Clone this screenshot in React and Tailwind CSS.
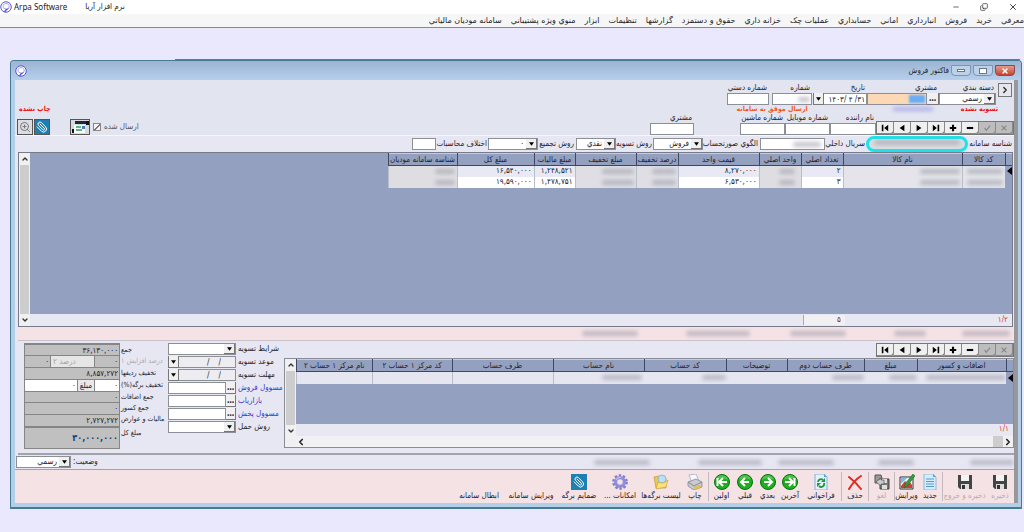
import React, { useState } from "react";
import { Minus, X, Copy, ChevronUp, ChevronDown, ChevronLeft, ChevronRight, ZoomIn, Paperclip } from "lucide-react";

const menus = [
  "معرفي",
  "خريد",
  "فروش",
  "انبارداري",
  "اماني",
  "حسابداري",
  "عمليات چک",
  "خزانه داري",
  "حقوق و دستمزد",
  "گزارشها",
  "تنظيمات",
  "ابزار",
  "منوي ويژه پشتيباني",
  "سامانه موديان مالياتي",
];

const Logo = () => (
  <svg viewBox="0 0 24 24" className="w-3 h-3 shrink-0">
    <circle cx="12" cy="12" r="10.5" fill="#fff" stroke="#5a55cf" strokeWidth="2" />
    <path d="M8 15C5 12 6 5 12 5s8 6 5 10" fill="none" stroke="#8d89e6" strokeWidth="1.500" />
    <path d="M7 14c4 2 7 2 11-1-1 5-6 5-7 9l-3 0c1-3 3-4 3-6-2 0-3-1-4-2z" fill="#5a55cf" />
  </svg>
);

const Smudge = ({ className = "" }) => (
  <span className={`block h-[5px] rounded-sm bg-[#9a9aa8] opacity-60 blur-[2px] ${className}`} />
);

const Arrow = ({ className = "" }) => (
  <span
    className={`absolute inset-y-0 w-[11px] flex items-center justify-center bg-[#f0f0f0] border-r border-b border-[#777] pointer-events-none ${className}`}
  >
    <svg viewBox="0 0 6 4" className="w-[5px] h-[4px]">
      <path d="M0 0h6L3 4z" fill="#000" />
    </svg>
  </span>
);

const Select = ({ id, options, label, className = "" }) => (
  <span className={`relative flex h-3 bg-white border border-[#8d8f96] ${className}`}>
    <select id={id} aria-label={label} className="w-full appearance-none bg-transparent pr-[13px] pl-px leading-[10px] outline-none">
      {options.map((o) => (
        <option key={o}>{o}</option>
      ))}
    </select>
    <Arrow className="right-0" />
  </span>
);

const Box = ({ id, value = "", label, bg = "bg-white", className = "" }) => (
  <input
    id={id}
    aria-label={label}
    defaultValue={value}
    className={`block h-3 min-w-0 border border-[#8d8f96] px-px leading-[10px] outline-none ${bg} ${className}`}
  />
);

const Column = ({ id, label, className = "", children }) => (
  <div className={`flex flex-col shrink-0 ${className}`}>
    <label htmlFor={id} className="pr-0.5 h-2.5 leading-[10px] whitespace-nowrap">
      {label}
    </label>
    {children}
  </div>
);

const navIcons = [
  { name: "cancel", off: true, d: "M2 2l6 6M8 2l-6 6" },
  { name: "confirm", off: true, d: "M2 5l2 3 5-6" },
  { name: "remove", d: "M1 5h8", wide: true },
  { name: "add", d: "M1 5h8M5 1v8", wide: true },
  { name: "last", fill: "M1 1l5 4-5 4zM7 1h2v8H7z" },
  { name: "next", fill: "M2 1l6 4-6 4z" },
  { name: "previous", fill: "M8 1L2 5l6 4z" },
  { name: "first", fill: "M9 1L4 5l5 4zM1 1h2v8H1z" },
];

const RecordNav = () => (
  <div className="flex h-3.5 shrink-0 bg-[#9a9a9a] border border-[#777]">
    {navIcons.map((n) => (
      <button
        key={n.name}
        aria-label={n.name}
        className={`w-[17px] h-3 flex items-center justify-center rounded-br-sm border-r border-b border-[#888] ${
          n.off ? "bg-[#bdbdbd]" : "bg-[#efefef]"
        }`}
      >
        <svg viewBox="0 0 10 10" className="w-2 h-2">
          {n.fill ? (
            <path d={n.fill} fill="#000" />
          ) : (
            <path d={n.d} fill="none" stroke={n.off ? "#858585" : "#000"} strokeWidth={n.wide ? 2.6 : 1.4} />
          )}
        </svg>
      </button>
    ))}
  </div>
);

const VScroll = () => (
  <div className="w-[11px] shrink-0 flex flex-col items-center bg-[#f0f0f0] text-[#333]">
    <ChevronUp className="w-2 h-3" strokeWidth={4} />
    <div className="flex-1 w-[9px] bg-[#cdcdcd]" />
    <ChevronDown className="w-2 h-3" strokeWidth={4} />
  </div>
);

const th = "h-3 p-0 bg-[#94a0c0] border-l border-b border-[#3f4763] border-t border-t-[#c4cbe0] font-normal leading-[10px] whitespace-nowrap overflow-hidden";
const td = "h-[11px] p-0 pr-0.5 leading-[10px] border-l border-[#b9bccb] overflow-hidden whitespace-nowrap";

const itemRows = [
  { qty: "۲", price: "۸,۲۷۰,۰۰۰", tax: "۱,۲۴۸,۵۲۱", total: "۱۶,۵۴۰,۰۰۰" },
  { qty: "۳", price: "۶,۵۳۰,۰۰۰", tax: "۱,۴۷۸,۷۵۱", total: "۱۹,۵۹۰,۰۰۰" },
];

const ItemsTable = () => (
  <table className="table-fixed w-[624px] border-collapse">
    <colgroup>
      <col className="w-[7px]" />
      <col className="w-[43px]" />
      <col className="w-[119px]" />
      <col className="w-[42px]" />
      <col className="w-[42px]" />
      <col className="w-[81px]" />
      <col className="w-[42px]" />
      <col className="w-[61px]" />
      <col className="w-[41px]" />
      <col className="w-[77px]" />
      <col className="w-[69px]" />
    </colgroup>
    <thead>
      <tr>
        <th className={th}></th>
        <th className={th}>کد کالا</th>
        <th className={th}>نام کالا</th>
        <th className={th}>تعداد اصلي</th>
        <th className={th}>واحد اصلي</th>
        <th className={th}>قيمت واحد</th>
        <th className={th}>درصد تخفيف</th>
        <th className={th}>مبلغ تخفيف</th>
        <th className={th}>مبلغ ماليات</th>
        <th className={th}>مبلغ کل</th>
        <th className={th}>شناسه سامانه موديان</th>
      </tr>
    </thead>
    <tbody>
      {itemRows.map((r, i) => (
        <tr key={r.total} className={i === 0 ? "bg-[#e8e9f4]" : "bg-white"}>
          <td className="p-0 bg-[#94a0c0]">
            {i === 0 && (
              <svg viewBox="0 0 5 8" className="w-[5px] h-2">
                <path d="M5 0v8L0 4z" fill="#000" />
              </svg>
            )}
          </td>
          <td className={`${td} bg-[#e4e4ea]`}><Smudge className="w-9" /></td>
          <td className={`${td} bg-[#e4e4ea]`}><Smudge className="w-10" /></td>
          <td className={td}>{r.qty}</td>
          <td className={`${td} bg-[#dedee2]`}><Smudge className="w-4 mr-1" /></td>
          <td className={td}>{r.price}</td>
          <td className={`${td} bg-[#dedee4]`}><Smudge className="w-6" /></td>
          <td className={`${td} bg-[#dedee4]`}><Smudge className="w-8" /></td>
          <td className={td}>{r.tax}</td>
          <td className={td}>{r.total}</td>
          <td className={`${td} bg-[#dedee2]`}><Smudge className="w-5" /></td>
        </tr>
      ))}
    </tbody>
  </table>
);

const AccountsTable = () => (
  <table className="table-fixed w-full border-collapse">
    <colgroup>
      <col className="w-[7px]" />
      <col className="w-[89px]" />
      <col className="w-[53px]" />
      <col className="w-[77px]" />
      <col className="w-[61px]" />
      <col className="w-[82px]" />
      <col className="w-[91px]" />
      <col className="w-[101px]" />
      <col className="w-[80px]" />
      <col />
    </colgroup>
    <thead>
      <tr>
        <th className={th}></th>
        <th className={th}>اضافات و کسور</th>
        <th className={th}>مبلغ</th>
        <th className={th}>طرف حساب دوم</th>
        <th className={th}>توضيحات</th>
        <th className={th}>کد حساب</th>
        <th className={th}>نام حساب</th>
        <th className={th}>طرف حساب</th>
        <th className={th}>کد مرکز ۱ حساب ۲</th>
        <th className={th}>نام مرکز ۱ حساب ۲</th>
      </tr>
    </thead>
    <tbody>
      <tr className="bg-[#e5e6f0]">
        <td className="p-0 bg-[#94a0c0]">
          <svg viewBox="0 0 5 8" className="w-[5px] h-2">
            <path d="M5 0v8L0 4z" fill="#000" />
          </svg>
        </td>
        <td className="p-0 h-3"><Smudge className="w-20" /></td>
        <td className="p-0"><Smudge className="w-7" /></td>
        <td className="p-0"><Smudge className="w-8" /></td>
        <td className="p-0"></td>
        <td className="p-0"><Smudge className="w-6" /></td>
        <td className={td}><Smudge className="w-10" /></td>
        <td className={td}></td>
        <td className={td}></td>
        <td className={td}></td>
      </tr>
    </tbody>
  </table>
);

// Toolbar icons
const Floppy = () => (
  <svg viewBox="0 0 16 16" className="w-4 h-4">
    <path d="M1 1h14v14H3l-2-2z" fill="#444" />
    <path d="M4 1h8v6H4z" fill="#f3f3f3" />
    <path d="M4 10h8v5H4z" fill="#ddd" />
    <path d="M5 11h3v4H5z" fill="#333" />
  </svg>
);

const NewDoc = () => (
  <svg viewBox="0 0 16 16" className="w-4 h-4">
    <path d="M2 0h9l3 3v13H2z" fill="#d7ecfb" stroke="#8bbbe0" />
    <path d="M11 0v3h3" fill="#5aa3dc" />
    <path d="M4 5h8M4 7.500h8M4 10h8M4 12.500h8" stroke="#4f9bd8" />
  </svg>
);

const EditIcon = () => (
  <svg viewBox="0 0 16 16" className="w-4 h-4">
    <path d="M1 3h13v12H1z" fill="#f3f3f3" stroke="#333" />
    <path d="M2 12l4-5 3 3 2-2 2 3v3H2z" fill="#db3a33" />
    <path d="M2 4h6L3 9H2z" fill="#7bbbe8" />
    <path d="M14 0l2 2-8 10-3 2 1-4z" fill="#2f9e43" stroke="#176b29" strokeWidth=".6" />
  </svg>
);

const UndoIcon = () => (
  <svg viewBox="0 0 16 16" className="w-4 h-4">
    <path d="M6 5h9v10H6z" fill="#777" stroke="#444" />
    <path d="M8 5h5v4H8zM8 11h5v4H8z" fill="#ddd" />
    <path d="M1 1h6l1 3-3 1v4H1z" fill="#999" stroke="#555" />
    <path d="M2 8l5-4v2h3v4H7v2z" fill="#ccc" stroke="#555" strokeWidth=".7" />
  </svg>
);

const DeleteIcon = () => (
  <svg viewBox="0 0 16 16" className="w-4 h-4">
    <path d="M2 3c4 3 8 7 12 12M14 2C9 5 5 10 2 15" fill="none" stroke="#e02a1f" strokeWidth="2" strokeLinecap="round" />
  </svg>
);

const RefreshIcon = () => (
  <svg viewBox="0 0 16 16" className="w-4 h-4">
    <path d="M2 0h9l3 3v13H2z" fill="#e3f1fc" stroke="#7fb2dc" />
    <path d="M11 0v3h3" fill="#5aa3dc" />
    <path d="M5 8a3 3 0 0 1 5-2M11 9a3 3 0 0 1-5 3" fill="none" stroke="#1d9a35" strokeWidth="1.800" />
    <path d="M12 4v4H8zM4 13V9h4z" fill="#1d9a35" />
  </svg>
);

const arrows = {
  last: "M3 8h7M7 4l4 4-4 4M12.500 4v8",
  next: "M4 8h8M8 4l4 4-4 4",
  prev: "M12 8H4M8 4L4 8l4 4",
  first: "M13 8H6M9 4L5 8l4 4M3.500 4v8",
};

const Green = ({ dir }) => (
  <svg viewBox="0 0 16 16" className="w-4 h-4">
    <circle cx="8" cy="8" r="7.500" fill="#1fae1f" stroke="#0c6e12" />
    <path d="M2 6a6.200 6.200 0 0 1 12 0c-3-2-9-2-12 0z" fill="#63cf5c" opacity=".7" />
    <path d={arrows[dir]} fill="none" stroke="#fff" strokeWidth="2" />
  </svg>
);

const PrintIcon = () => (
  <svg viewBox="0 0 16 16" className="w-4 h-4">
    <path d="M2 1l7-1 3 7-7 2z" fill="#f5f8ff" stroke="#9aa3b5" strokeWidth=".7" />
    <path d="M1 8l8-3 6 3v5l-8 3-6-4z" fill="#c9cbd1" stroke="#777c88" strokeWidth=".7" />
    <path d="M1 8l6 4 8-4" fill="none" stroke="#888" />
    <path d="M7 13l6-2 1 2-6 3z" fill="#e8bf45" />
  </svg>
);

const FolderIcon = () => (
  <svg viewBox="0 0 16 16" className="w-4 h-4">
    <path d="M1 3l5-1 2 2h5v10H3z" fill="#f0c64f" stroke="#c5973a" strokeWidth=".7" />
    <circle cx="9" cy="5" r="4" fill="#b9e0f3" stroke="#79b4d3" strokeWidth=".8" />
    <path d="M3 15l2-7c4 2 7 1 10-2l-2 7z" fill="#fbe17e" stroke="#d0a53d" strokeWidth=".7" />
  </svg>
);

const GearIcon = () => (
  <svg viewBox="0 0 16 16" className="w-4 h-4">
    <circle cx="8" cy="8" r="6.500" fill="none" stroke="#7f7cc9" strokeWidth="2.600" strokeDasharray="2.400 1.684" />
    <circle cx="8" cy="8" r="4.400" fill="none" stroke="#908ddb" strokeWidth="3.200" />
    <path d="M4 6a4.500 4.500 0 0 1 5-2.500" fill="none" stroke="#c3c1f2" strokeWidth="1.200" />
  </svg>
);

const Clip = () => (
  <span className="w-4 h-4 flex items-center justify-center bg-[#1e7fb4] text-white">
    <Paperclip className="w-3 h-3 -scale-x-100" strokeWidth={2} />
  </span>
);

const tools = [
  { label: "ذخيره", icon: <Floppy />, w: "w-7", off: true },
  { label: "ذخيره و خروج", icon: <Floppy />, w: "w-11", off: true, sep: true },
  { label: "جديد", icon: <NewDoc />, w: "w-6" },
  { label: "ويرايش", icon: <EditIcon />, w: "w-6", sep: true },
  { label: "لغو", icon: <UndoIcon />, w: "w-[26px]", off: true, sep: true },
  { label: "حذف", icon: <DeleteIcon />, w: "w-[27px]", sep: true },
  { label: "فراخواني", icon: <RefreshIcon />, w: "w-10" },
  { label: "آخرين", icon: <Green dir="last" />, w: "w-[22px]" },
  { label: "بعدي", icon: <Green dir="next" />, w: "w-[23px]" },
  { label: "قبلي", icon: <Green dir="prev" />, w: "w-[22px]" },
  { label: "اولين", icon: <Green dir="first" />, w: "w-[26px]", sep: true },
  { label: "چاپ", icon: <PrintIcon />, w: "w-[26px]" },
  { label: "ليست برگه‌ها", icon: <FolderIcon />, w: "w-[42px]" },
  { label: "امکانات ...", icon: <GearIcon />, w: "w-10" },
  { label: "ضمايم برگه", icon: <Clip />, w: "w-[42px]" },
  { label: "ويرايش سامانه", w: "w-[54px]" },
  { label: "ابطال سامانه", w: "w-[50px]" },
];

const sums = "block w-full min-w-0 bg-[#c0c0c0] border-b border-[#858585] px-px leading-[10px] outline-none";

const Totals = () => (
  <div className="flex shrink-0" dir="ltr">
    <div className="w-24 border border-t-2 border-[#858585] bg-[#c0c0c0] text-right" dir="rtl">
      <input id="sum" readOnly value="۳۶,۱۳۰,۰۰۰" className={`${sums} h-[11px]`} />
      <div className="flex h-3 border-b border-[#858585]">
        <input id="inc1" defaultValue="۰" className="w-6 px-px outline-none" />
        <label htmlFor="inc2" className="w-[45px] bg-[#e6e6e6] text-[#a5a5a5] pl-4 leading-[11px] border-x border-[#858585] whitespace-nowrap">
          <span className="block text-left -ml-4 pl-0.5">درصد ۲</span>
        </label>
        <input id="inc2" defaultValue="۰" className="flex-1 min-w-0 px-px outline-none" />
      </div>
      <input id="rowoff" readOnly value="۸,۸۵۷,۲۷۲" className={`${sums} h-3`} />
      <div className="flex h-3 bg-white border-b border-[#858585]">
        <input id="pageoff" defaultValue="۰" className="w-6 px-px outline-none" />
        <label htmlFor="amount" className="px-0.5 bg-[#e8e8ee] leading-[11px] border-x border-[#858585]">مبلغ</label>
        <input id="amount" defaultValue="۰" className="flex-1 min-w-0 px-px outline-none" />
      </div>
      <input id="adds" readOnly value="۰" className={`${sums} h-[11px]`} />
      <input id="subs" readOnly value="۰" className={`${sums} h-3`} />
      <input id="tax" readOnly value="۲,۷۲۷,۲۷۲" className={`${sums} h-3`} />
      <input id="grand" readOnly value="۳۰,۰۰۰,۰۰۰" className="block w-full h-[21px] border-t border-[#858585] px-px text-[9px] font-bold text-[#123f7d] outline-none" />
    </div>
    <div className="w-12 pl-px pt-0.5 flex flex-col items-start whitespace-nowrap text-[7px]">
      <label htmlFor="sum" className="h-[11px]">جمع</label>
      <label htmlFor="inc1" className="h-3 text-[#aaaab4]">درصد افزايش ۱</label>
      <label htmlFor="rowoff" className="h-3">تخفيف رديفها</label>
      <label htmlFor="pageoff" className="h-3" dir="rtl">تخفيف برگه(%)</label>
      <label htmlFor="adds" className="h-[11px]">جمع اضافات</label>
      <label htmlFor="subs" className="h-[11px]">جمع کسور</label>
      <label htmlFor="tax" className="h-3.5">ماليات و عوارض</label>
      <label htmlFor="grand">مبلغ کل</label>
    </div>
  </div>
);

const termRows = [
  { id: "terms", label: "شرايط تسويه", type: "select" },
  { id: "due", label: "موعد تسويه", type: "date" },
  { id: "deadline", label: "مهلت تسويه", type: "date" },
  { id: "seller", label: "مسوول فروش", type: "lookup" },
  { id: "marketer", label: "بازارياب", type: "lookup" },
  { id: "delivery", label: "مسوول پخش", type: "lookup" },
  { id: "shipping", label: "روش حمل", type: "select" },
];

const Terms = () => (
  <div className="flex flex-col gap-px shrink-0 w-[116px]" dir="ltr">
    {termRows.map((r) => (
      <div key={r.id} className="flex items-center gap-0.5 h-3">
        <div className="relative w-[68px]">
          {r.type === "select" && <Select id={r.id} options={[""]} />}
          {r.type === "date" && (
            <>
              <Box id={r.id} value="/    /" bg="bg-[#ededf1]" className="w-full text-right pr-3.5 whitespace-pre" />
              <Arrow className="left-0 border-l" />
            </>
          )}
          {r.type === "lookup" && (
            <div className="flex">
              <Box id={r.id} className="flex-1" />
              <button aria-label={`${r.label} ...`} className="w-2.5 bg-[#f0f0f0] border-r border-b border-[#777] font-bold leading-[8px]">…</button>
            </div>
          )}
        </div>
        <label htmlFor={r.id} className={`whitespace-nowrap ${r.type === "lookup" ? "text-[#3a35d0]" : ""}`}>
          {r.label}
        </label>
      </div>
    ))}
  </div>
);

const InvoiceHeader = () => {
  const [sent, setSent] = useState(true);

  return (
    <div className="bg-[#e2e5ef] border-b border-[#f6f6fb]">
      <div className="flex items-end pt-[3px] pr-0.5">
        <button aria-label="collapse" className="self-start w-3.5 h-3.5 ml-0.5 border border-[#777] bg-[#e6e6ec] flex items-center justify-center">
          <ChevronRight className="w-2.5 h-2.5" strokeWidth={3} />
        </button>
        <Column id="category" label="دسته بندي" className="w-[57px]">
          <Select id="category" options={["رسمي"]} />
        </Column>
        <Column id="customer" label="مشتري" className="w-[72px]">
          <div className="flex">
            <button aria-label="browse customers" className="w-3 h-3 bg-[#f0f0f0] border-r border-b border-[#777] font-bold leading-[8px]">…</button>
            <div className="relative flex-1">
              <Box id="customer" bg="bg-[#fcd9b4]" className="w-full" />
              <span className="absolute top-0.5 right-0.5 w-4 h-2 bg-[#69aef5] blur-[1px]" />
            </div>
          </div>
        </Column>
        <Column id="date" label="تاريخ" className="w-[54px]">
          <div className="relative" dir="ltr">
            <Box id="date" value="۱۴۰۳/ ۴ /۳۱" className="w-full text-right" />
            <Arrow className="left-0 border-l" />
          </div>
        </Column>
        <Column id="number" label="شماره" className="w-10 mr-px">
          <div className="relative">
            <Box id="number" className="w-full" />
            <Smudge className="absolute top-1 right-0.5 w-3" />
          </div>
        </Column>
        <Column id="manual" label="شماره دستي" className="w-[42px] mr-[3px]">
          <Box id="manual" />
        </Column>
      </div>

      <div className="flex items-center h-2 text-[7px] font-bold whitespace-nowrap">
        <span className="mr-4 text-[#ee1111]">تسويه نشده</span>
        <span className="mr-7 w-10 h-1 bg-[#8d88e8] opacity-60 blur-[2px]" />
        <span className="mr-[85px] text-[#f4581e]">ارسال موفق به سامانه</span>
        <span className="mr-auto ml-1 text-[#ee1111]">چاپ نشده</span>
      </div>

      <div className="flex items-end">
        <RecordNav />
        <Column id="driver" label="نام راننده" className="w-[46px]">
          <Box id="driver" />
        </Column>
        <Column id="mobile" label="شماره موبايل" className="w-[45px]">
          <Box id="mobile" />
        </Column>
        <Column id="plate" label="شماره ماشين" className="w-[45px]">
          <Box id="plate" />
        </Column>
        <Column id="client" label="مشتري" className="w-11 mr-[46px]">
          <Box id="client" />
        </Column>
        <div className="mr-auto flex items-center">
          <label htmlFor="sent" className="text-[#55565e]">ارسال شده</label>
          <input
            id="sent"
            type="checkbox"
            checked={sent}
            onChange={() => setSent(!sent)}
            className="appearance-none w-2 h-2 mx-[3px] border border-[#888] bg-[#f4f4f6] checked:bg-[linear-gradient(135deg,transparent_45%,#777_45%,#777_60%,transparent_60%)]"
          />
          <button aria-label="form view" className="w-5 h-4 border border-[#555] bg-[#d6d9de]">
            <svg viewBox="0 0 18 14" className="w-full h-full">
              <path d="M4 1h13v3H4z" fill="#20263e" />
              <path d="M3 5h11v8H3z" fill="#fff" />
              <path d="M5 7h5M5 10h6" stroke="#2ba05f" strokeWidth="1.500" />
              <path d="M11 6h3v3h-3z" fill="#4a7cc4" />
              <path d="M1 9h2v4H1zM15 1h3v4h-3z" fill="#111" />
            </svg>
          </button>
          <button aria-label="attachments" className="mr-5 w-4 h-4 border border-[#555] bg-[#1e7fb4] text-white flex items-center justify-center">
            <Paperclip className="w-3 h-3 -scale-x-100" />
          </button>
          <button aria-label="preview" className="mr-px ml-0.5 w-4 h-4 border border-[#555] bg-[#dcdde2] text-[#777] flex items-center justify-center">
            <ZoomIn className="w-3 h-3" strokeWidth={2} />
          </button>
        </div>
      </div>
    </div>
  );
};

const InvoiceOptions = () => (
  <div className="flex items-center h-4 bg-[#e6e7f2] pr-0.5 whitespace-nowrap">
    <label htmlFor="sysid" className="w-11">شناسه سامانه</label>
    <div className="relative">
      <input id="sysid" className="block w-[102px] h-4 rounded-full border-[3px] border-[#1ce3ea] bg-[#dcdde2] outline-none" />
      <Smudge className="absolute top-1 inset-x-2 opacity-30" />
    </div>
    <label htmlFor="serial" className="w-[41px] pr-px">سريال داخلي</label>
    <div className="relative">
      <Box id="serial" className="w-[65px]" />
      <Smudge className="absolute top-1 right-1 w-7 opacity-30" />
    </div>
    <label htmlFor="pattern" className="w-[57px] pr-0.5">الگوي صورتحساب</label>
    <Select id="pattern" options={["فروش"]} className="w-[50px]" />
    <label htmlFor="settle" className="w-[37px] pr-px">روش تسويه</label>
    <Select id="settle" options={["نقدي"]} className="w-10" />
    <label htmlFor="merge" className="w-[38px] pr-0.5">روش تجميع</label>
    <Select id="merge" options={["۰"]} className="w-[50px]" />
    <label htmlFor="diff" className="w-[52px] pr-px">اختلاف محاسبات</label>
    <Box id="diff" className="w-6" />
  </div>
);

const App = () => (
  <div dir="rtl" className="min-h-screen overflow-hidden bg-[#eae8fd] text-[8px] leading-[10px] text-[#22232b] font-['DejaVu_Sans_Condensed','DejaVu_Sans',sans-serif]">
    {/* Application bar */}
    <header dir="ltr" className="h-3.5 bg-white flex items-center text-[#222]">
      <Logo />
      <span className="ml-0.5 font-['Noto_Sans',sans-serif]">Arpa Software</span>
      <span className="ml-[18px]">نرم افزار آريا</span>
      <div className="ml-auto flex gap-5 pr-1.5">
        <button aria-label="Minimize"><Minus className="w-2 h-2" /></button>
        <button aria-label="Restore"><Copy className="w-2 h-2 -scale-y-100" /></button>
        <button aria-label="Close"><X className="w-2.5 h-2.5" /></button>
      </div>
    </header>
    <nav className="h-3.5 bg-[#f6f6f6] border-b border-[#888] flex items-center gap-[9px] whitespace-nowrap font-['DejaVu_Sans',sans-serif]">
      {menus.map((m) => (
        <button key={m} className="shrink-0">{m}</button>
      ))}
    </nav>

    {/* Invoice window */}
    <div className="mt-[31px] ml-[175px] mr-1 border-t border-[#777]" />
    <main className="ml-2.5 mr-0.5 border border-[#477a96] border-b-2 rounded-t bg-[#b3cfe8]">
      <div className="h-[19px] pr-1.5 pl-1 flex items-center rounded-t bg-linear-to-b from-[#9cb4d2] to-[#b5cfec]">
        <div className="flex gap-0.5">
          <button aria-label="Close window" className="w-5 h-[11px] rounded-b-sm border border-[#8b4a4a] bg-linear-to-b from-[#e09a8c] to-[#c8402b] text-white flex items-center justify-center">
            <X className="w-2 h-2" strokeWidth={4} />
          </button>
          <button aria-label="Restore window" className="w-5 h-[11px] rounded-b-sm border border-[#7d93b0] bg-[#bdd2e8] flex items-center justify-center">
            <span className="w-2 h-1.5 border border-[#66778e] bg-white" />
          </button>
          <button aria-label="Minimize window" className="w-5 h-[11px] rounded-b-sm border border-[#7d93b0] bg-[#bdd2e8] flex items-center justify-center">
            <span className="w-2 h-[3px] border border-[#66778e] bg-white" />
          </button>
        </div>
        <h1 className="mr-0.5">فاکتور فروش</h1>
        <span className="mr-auto"><Logo /></span>
      </div>

      <div className="ml-1 mr-[3px] border-r-4 border-[#98989c] bg-[#e6e7f2]">
        <InvoiceHeader />
        <InvoiceOptions />

        {/* Items */}
        <section className="mx-px ml-[3px] border border-[#777a88] flex h-[175px]">
          <div className="flex-1 flex flex-col bg-[#94a0c0]">
            <ItemsTable />
            <div className="mt-auto h-3 bg-[#e8e8f3] flex items-center text-[#d93a3a]">
              <span dir="ltr" className="mr-1">۱/۲</span>
              <span className="mr-[153px] w-[42px] h-2.5 bg-[#f1f1f3] border-l border-[#aaa] pr-1 text-[#8a2f3c]">۵</span>
            </div>
          </div>
          <VScroll />
        </section>
        <div className="h-3.5 ml-[3px] bg-[#f5e2e5] border-b border-[#c9c2cb] flex items-center pr-1">
          <Smudge className="w-12" />
          <Smudge className="w-8 mr-9" />
          <Smudge className="w-14 mr-12" />
          <Smudge className="w-16 mr-10" />
          <Smudge className="w-14 mr-12" />
        </div>

        {/* Accounts and totals */}
        <section className="flex pt-0.5 h-[114px] ml-[3px] border-b-2 border-[#a0a2ac]">
          <div className="flex-1 min-w-0 flex flex-col items-start">
            <RecordNav />
            <div className="mt-px w-full h-[90px] border border-[#8a8c98] flex">
              <div className="flex-1 min-w-0 flex flex-col bg-[#94a0c0]">
                <AccountsTable />
                <div className="mt-auto h-3 pr-1 bg-[#e8e8f3] text-[#d93a3a]"><span dir="ltr">۱/۱</span></div>
                <div className="h-[11px] bg-[#f1f1f3] flex items-center justify-between">
                  <span className="flex items-center"><ChevronRight className="w-2.5 h-2.5" strokeWidth={4} /><span className="w-2.5 h-[11px] bg-[#cdcdcd]" /></span>
                  <ChevronLeft className="w-2.5 h-2.5" strokeWidth={4} />
                </div>
              </div>
              <div className="flex bg-[#f0f0f0] pb-2.5"><VScroll /></div>
            </div>
          </div>
          <Terms />
          <div className="ml-1.5"><Totals /></div>
        </section>

        {/* Status */}
        <section className="flex items-center h-[15px] border-b border-[#a0a2ac]">
          <Smudge className="w-11" />
          <Smudge className="w-9 mr-14" />
          <Smudge className="w-14 mr-11" />
          <Smudge className="w-16 mr-4" />
          <Smudge className="w-14 mr-12" />
          <label htmlFor="status" className="mr-auto ml-0.5">وضعيت:</label>
          <Select id="status" options={["رسمي"]} className="w-[55px] ml-px" />
        </section>

        {/* Toolbar */}
        <footer className="h-[33px] bg-[#f5e2e5] flex items-stretch py-0.5 whitespace-nowrap">
          {tools.map((t) => (
            <button
              key={t.label}
              disabled={t.off}
              className={`shrink-0 flex flex-col items-center gap-px pt-0.5 ${t.w} ${t.sep ? "border-l border-[#c3b9c0]" : ""} ${
                t.off ? "text-[#b5a9b0]" : ""
              }`}
            >
              <span className="h-4">{t.icon}</span>
              <span className="h-2.5">{t.label}</span>
            </button>
          ))}
        </footer>
      </div>
      <div className="h-1" />
    </main>
  </div>
);

export default App;
